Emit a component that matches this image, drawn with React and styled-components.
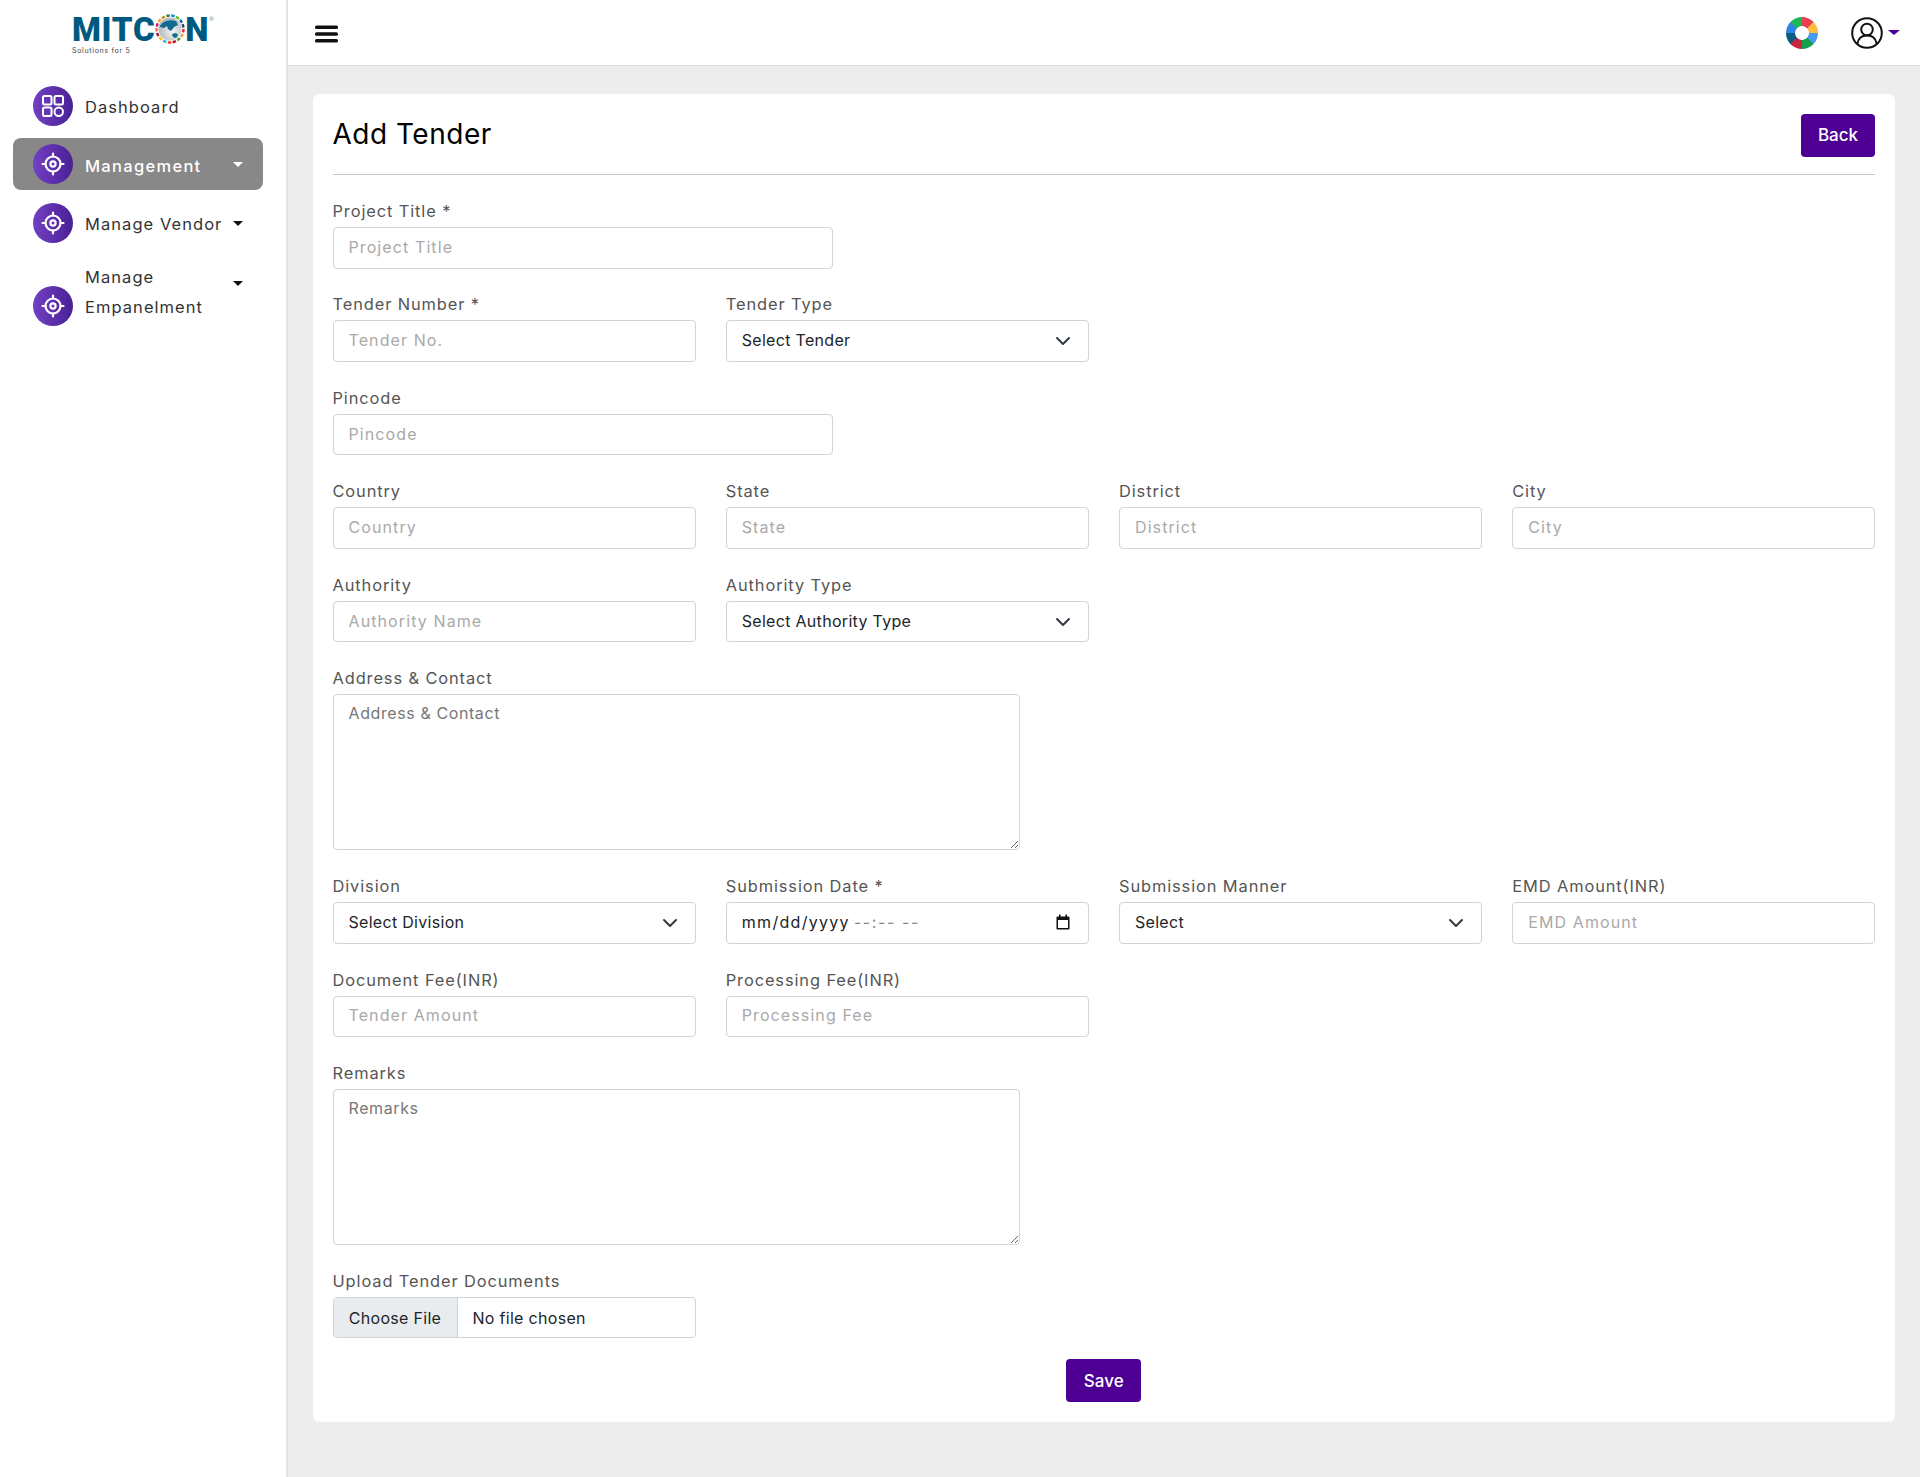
import React from "react";
import styled, { createGlobalStyle } from "styled-components";

const FONT = `"Inter", "Open Sans", "Liberation Sans", sans-serif`;

const Global = createGlobalStyle`
  * { box-sizing: border-box; }
  html, body { margin: 0; padding: 0; }
  body { font-family: ${FONT}; background: #ededed; }
`;

const Shell = styled.div`
  display: flex;
  min-height: 1477px;
`;
const Sidebar = styled.aside`
  width: 288px;
  flex: none;
  background: #fff;
  border-right: 2px solid #e4e4e4;
  padding: 0 0 0 13px;
`;
const LogoWrap = styled.div`
  height: 80px;
  padding: 15px 0 0 59px;
`;
const LogoMark = styled.div`
  display: flex;
  align-items: center;
  height: 28px;
  color: #005a80;
  font-family: "Roboto", "Liberation Sans", sans-serif;
  font-weight: 900;
  font-size: 33px;
  letter-spacing: 0.7px;
`;
const LogoReg = styled.sup`
  align-self: flex-start;
  font-family: "Liberation Sans", sans-serif;
  font-size: 6px;
  font-weight: 400;
  line-height: 8px;
  letter-spacing: 0;
  color: #4a7f99;
`;
const LogoSub = styled.div`
  font-size: 7px;
  color: #444;
  letter-spacing: 0.7px;
  margin-top: 3px;
  line-height: 9px;
`;
const NavItem = styled.div`
  display: flex;
  align-items: center;
  width: 250px;
  height: ${p => p.$h || 52}px;
  margin-bottom: ${p => p.$mb || 0}px;
  padding: 0 20px;
  border-radius: 8px;
  background: ${p => (p.$active ? "#888888" : "transparent")};
  color: ${p => (p.$active ? "#fff" : "#333")};
  font-size: 16.5px;
  font-weight: ${p => (p.$active ? 500 : 400)};
  letter-spacing: ${p => (p.$active ? 1.3 : 1.05)}px;
`;
const NavIcon = styled.span`
  width: 40px;
  height: 40px;
  flex: none;
  border-radius: 50%;
  display: flex;
  align-items: center;
  justify-content: center;
  background: linear-gradient(90deg, #7240c4, #4a2094);
  align-self: ${p => (p.$end ? "flex-end" : "center")};
`;
const NavLabel = styled.span`
  flex: 1;
  margin-left: 12px;
  line-height: 30px;
  padding-top: ${p => p.$top || 0}px;
  padding-bottom: ${p => p.$bottom || 0}px;
`;
const Caret = styled.span`
  flex: none;
  width: 0;
  height: 0;
  border-left: ${p => p.$size || 5}px solid transparent;
  border-right: ${p => p.$size || 5}px solid transparent;
  border-top: ${p => (p.$size ? p.$size - 1 : 5)}px solid ${p => p.$color || "#111"};
  margin-bottom: ${p => p.$mb || 0}px;
`;
const Main = styled.div`
  flex: 1;
  min-width: 0;
`;
const Topbar = styled.header`
  height: 66px;
  background: #fff;
  border-bottom: 1px solid #ddd;
  display: flex;
  align-items: center;
  padding: 2px 20px 0 27px;
`;
const Wheel = styled.div`
  width: 32px;
  height: 32px;
  margin: -2px 0 0 auto;
  border-radius: 50%;
  background: radial-gradient(circle, #fff 0 6.5px, transparent 7.2px),
    conic-gradient(#e8414b 0 45deg, #fdbb3f 45deg 90deg, #4a9af5 90deg 135deg, #12a04a 135deg 180deg, #c8243f 180deg 225deg, #0e5a80 225deg 270deg, #2f86e0 270deg 315deg, #1fb858 315deg 360deg);
`;
const UserBox = styled.div`
  display: flex;
  align-items: center;
  gap: 5px;
  margin: -2px 0 0 33px;
`;
const Content = styled.main`
  padding: 28px 25px 0 25px;
`;
const Card = styled.section`
  background: #fff;
  border-radius: 6px;
  height: 1328px;
  padding: 20px 20px 20px 19.5px;
`;
const CardHead = styled.div`
  display: flex;
  justify-content: space-between;
  align-items: center;
  height: 61px;
  border-bottom: 1px solid #c8c8c8;
  padding-bottom: 18px;
  margin-bottom: 24px;
`;
const Title = styled.h1`
  margin: 0 0 2px;
  font-size: 28px;
  font-weight: 400;
  color: #000;
  letter-spacing: 0.5px;
`;
const Button = styled.button`
  border: 0;
  height: 43px;
  width: ${p => p.$w}px;
  border-radius: 4px;
  background: #4d0093;
  color: #fff;
  font-family: ${FONT};
  font-size: 17px;
  font-weight: 500;
`;
const Row = styled.div`
  display: grid;
  grid-template-columns: repeat(4, 363px);
  column-gap: 30.25px;
  margin-bottom: 23.95px;
`;
const Field = styled.div`
  grid-column: span ${p => p.$span || 1};
  width: ${p => (p.$w ? `${p.$w}px` : "auto")};
`;
const Label = styled.label`
  display: block;
  height: 24px;
  line-height: 24px;
  margin-bottom: 4px;
  font-size: 16.4px;
  color: #555;
  letter-spacing: 0.9px;
`;
const controlCss = `
  display: block;
  width: 100%;
  height: 41.5px;
  border: 1px solid #ced4da;
  border-radius: 4px;
  padding: 0 15px 2px;
  background-color: #fff;
  font-family: ${FONT};
  font-size: 16px;
  letter-spacing: 0.3px;
  color: #212529;
  outline: none;
`;
const Input = styled.input`
  ${controlCss}
  &::placeholder { color: #a9a9a9; opacity: 1; letter-spacing: 1.1px; }
`;
const DateBox = styled.div`
  ${controlCss}
  display: flex;
  align-items: center;
  justify-content: space-between;
  padding-right: 18px;
  letter-spacing: 1.3px;
`;
const DateTime = styled.span`
  color: #8a8a8a;
  margin-left: 4px;
  letter-spacing: 1.6px;
`;
const Select = styled.select`
  ${controlCss}
  appearance: none;
  background-image: url("data:image/svg+xml,%3csvg xmlns='http://www.w3.org/2000/svg' viewBox='0 0 16 16'%3e%3cpath fill='none' stroke='%23343a40' stroke-linecap='round' stroke-linejoin='round' stroke-width='2' d='m2 5 6 6 6-6'/%3e%3c/svg%3e");
  background-repeat: no-repeat;
  background-position: right 17px center;
  background-size: 16px 16px;
`;
const Textarea = styled.textarea`
  ${controlCss}
  height: ${p => p.$h}px;
  padding-top: 6px;
  line-height: 24px;
  resize: vertical;
  &::placeholder { color: #777; opacity: 1; letter-spacing: 0.6px; }
`;
const FileInput = styled.input`
  ${controlCss}
  padding: 0;
  line-height: 39px;
  overflow: hidden;
  &::file-selector-button {
    height: 39.5px;
    width: 124px;
    margin: 0 15px 0 0;
    border: 0;
    border-right: 1px solid #ced4da;
    background: #e9ecef;
    color: #212529;
    font-family: ${FONT};
    font-size: 16px;
    letter-spacing: 0.3px;
  }
`;
const Actions = styled.div`
  display: flex;
  justify-content: center;
  margin-top: -3px;
`;

const DashIcon = () => (
  <svg width="24" height="24" viewBox="0 0 24 24" fill="none" stroke="#fff" strokeWidth="2">
    <rect x="2" y="2" width="8.5" height="8.5" rx="1.5" />
    <rect x="13.5" y="2" width="8.5" height="8.5" rx="1.5" />
    <rect x="2" y="13.5" width="8.5" height="8.5" rx="1.5" />
    <circle cx="17.75" cy="17.75" r="4.25" />
  </svg>
);

const TargetIcon = () => (
  <svg width="24" height="24" viewBox="0 0 24 24" fill="none" stroke="#fff" strokeWidth="2.2" strokeLinecap="round">
    <circle cx="12" cy="12" r="7.5" />
    <circle cx="12" cy="12" r="2.6" />
    <path d="M12 1.5v3M12 19.5v3M1.5 12h3M19.5 12h3" />
  </svg>
);

const CalendarIcon = () => (
  <svg width="14" height="16" viewBox="0 0 14 16">
    <path d="M3 0.5h1.6v2H9.4v-2H11v2h1.4c.6 0 1.1.5 1.1 1.1v10.8c0 .6-.5 1.1-1.1 1.1H1.6c-.6 0-1.1-.5-1.1-1.1V3.6c0-.6.5-1.1 1.1-1.1H3z" fill="#111" />
    <rect x="2" y="6" width="10" height="8" fill="#fff" />
  </svg>
);

const Globe = () => {
  const colors = ["#e5243b", "#dda63a", "#4c9f38", "#c5192d", "#ff3a21", "#26bde2", "#fcc30b", "#a21942", "#fd6925", "#dd1367", "#fd9d24", "#bf8b2e", "#3f7e44", "#0a97d9", "#56c02b", "#00689d", "#19486a"];
  return (
    <svg width="30" height="30" viewBox="0 0 30 30">
      <defs>
        <radialGradient id="globeFill" cx="0.6" cy="0.6" r="0.7">
          <stop offset="0" stopColor="#f4f4f4" />
          <stop offset="1" stopColor="#a9adb3" />
        </radialGradient>
      </defs>
      {colors.map((c, i) => (
        <circle
          key={c}
          cx="15"
          cy="15"
          r="13.5"
          fill="none"
          stroke={c}
          strokeWidth="2.4"
          pathLength="17"
          strokeDasharray="0.7 16.3"
          strokeDashoffset={-i}
        />
      ))}
      <circle cx="15" cy="15" r="11.5" fill="url(#globeFill)" />
      <path d="M5 12c3-5 10-7 16-5l2 4-4 2-3 4-3-2-1-3-3 2-4-1z" fill="#0f6b8f" />
      <path d="M17 20l4-1 2 2-2 3-3-1z" fill="#0f6b8f" />
    </svg>
  );
};

const Hamburger = () => (
  <svg width="24" height="18" viewBox="0 0 24 18">
    <rect x="0" y="0.5" width="23" height="3.6" rx="1.6" fill="#111" />
    <rect x="0" y="7.2" width="23" height="3.6" rx="1.6" fill="#111" />
    <rect x="0" y="13.9" width="23" height="3.6" rx="1.6" fill="#111" />
  </svg>
);

const UserIcon = () => (
  <svg width="32" height="32" viewBox="0 0 32 32" fill="none" stroke="#111" strokeWidth="2">
    <circle cx="16" cy="16" r="14.8" />
    <circle cx="16" cy="12.5" r="5.8" />
    <path d="M6.5 26.5c.8-5.5 4.5-8 9.5-8s8.7 2.5 9.5 8" />
  </svg>
);

const Text = ({ label, placeholder, span, w }) => (
  <Field $span={span} $w={w}>
    <Label>{label}</Label>
    <Input type="text" placeholder={placeholder} />
  </Field>
);

const Drop = ({ label, value }) => (
  <Field>
    <Label>{label}</Label>
    <Select defaultValue={value}>
      <option>{value}</option>
    </Select>
  </Field>
);

const Area = ({ label, placeholder }) => (
  <Field $span={2} $w={687}>
    <Label>{label}</Label>
    <Textarea $h={156} placeholder={placeholder} />
  </Field>
);

export default function App() {
  return (
    <Shell>
      <Global />
      <Sidebar>
        <LogoWrap>
          <LogoMark>
            MITC
            <Globe />
            N
            <LogoReg>®</LogoReg>
          </LogoMark>
          <LogoSub>Solutions for 5</LogoSub>
        </LogoWrap>
        <NavItem $h={52} $mb={6}>
          <NavIcon><DashIcon /></NavIcon>
          <NavLabel $top={2}>Dashboard</NavLabel>
        </NavItem>
        <NavItem $active $h={52} $mb={7}>
          <NavIcon><TargetIcon /></NavIcon>
          <NavLabel $top={3}>Management</NavLabel>
          <Caret $color="#fff" />
        </NavItem>
        <NavItem $h={52} $mb={10}>
          <NavIcon><TargetIcon /></NavIcon>
          <NavLabel $top={2}>Manage Vendor</NavLabel>
          <Caret />
        </NavItem>
        <NavItem $h={67}>
          <NavIcon $end><TargetIcon /></NavIcon>
          <NavLabel $bottom={2}>Manage Empanelment</NavLabel>
          <Caret $mb={18} />
        </NavItem>
      </Sidebar>
      <Main>
        <Topbar>
          <Hamburger />
          <Wheel />
          <UserBox>
            <UserIcon />
            <Caret $color="#4d0093" $size={6} />
          </UserBox>
        </Topbar>
        <Content>
          <Card>
            <CardHead>
              <Title>Add Tender</Title>
              <Button $w={74}>Back</Button>
            </CardHead>
            <Row>
              <Text label="Project Title *" placeholder="Project Title" span={2} w={500} />
            </Row>
            <Row>
              <Text label="Tender Number *" placeholder="Tender No." />
              <Drop label="Tender Type" value="Select Tender" />
            </Row>
            <Row>
              <Text label="Pincode" placeholder="Pincode" span={2} w={500} />
            </Row>
            <Row>
              <Text label="Country" placeholder="Country" />
              <Text label="State" placeholder="State" />
              <Text label="District" placeholder="District" />
              <Text label="City" placeholder="City" />
            </Row>
            <Row>
              <Text label="Authority" placeholder="Authority Name" />
              <Drop label="Authority Type" value="Select Authority Type" />
            </Row>
            <Row>
              <Area label="Address & Contact" placeholder="Address & Contact" />
            </Row>
            <Row>
              <Drop label="Division" value="Select Division" />
              <Field>
                <Label>Submission Date *</Label>
                <DateBox>
                  <span>mm/dd/yyyy<DateTime>--:-- --</DateTime></span>
                  <CalendarIcon />
                </DateBox>
              </Field>
              <Drop label="Submission Manner" value="Select" />
              <Text label="EMD Amount(INR)" placeholder="EMD Amount" />
            </Row>
            <Row>
              <Text label="Document Fee(INR)" placeholder="Tender Amount" />
              <Text label="Processing Fee(INR)" placeholder="Processing Fee" />
            </Row>
            <Row>
              <Area label="Remarks" placeholder="Remarks" />
            </Row>
            <Row>
              <Field>
                <Label>Upload Tender Documents</Label>
                <FileInput type="file" />
              </Field>
            </Row>
            <Actions>
              <Button $w={75}>Save</Button>
            </Actions>
          </Card>
        </Content>
      </Main>
    </Shell>
  );
}
